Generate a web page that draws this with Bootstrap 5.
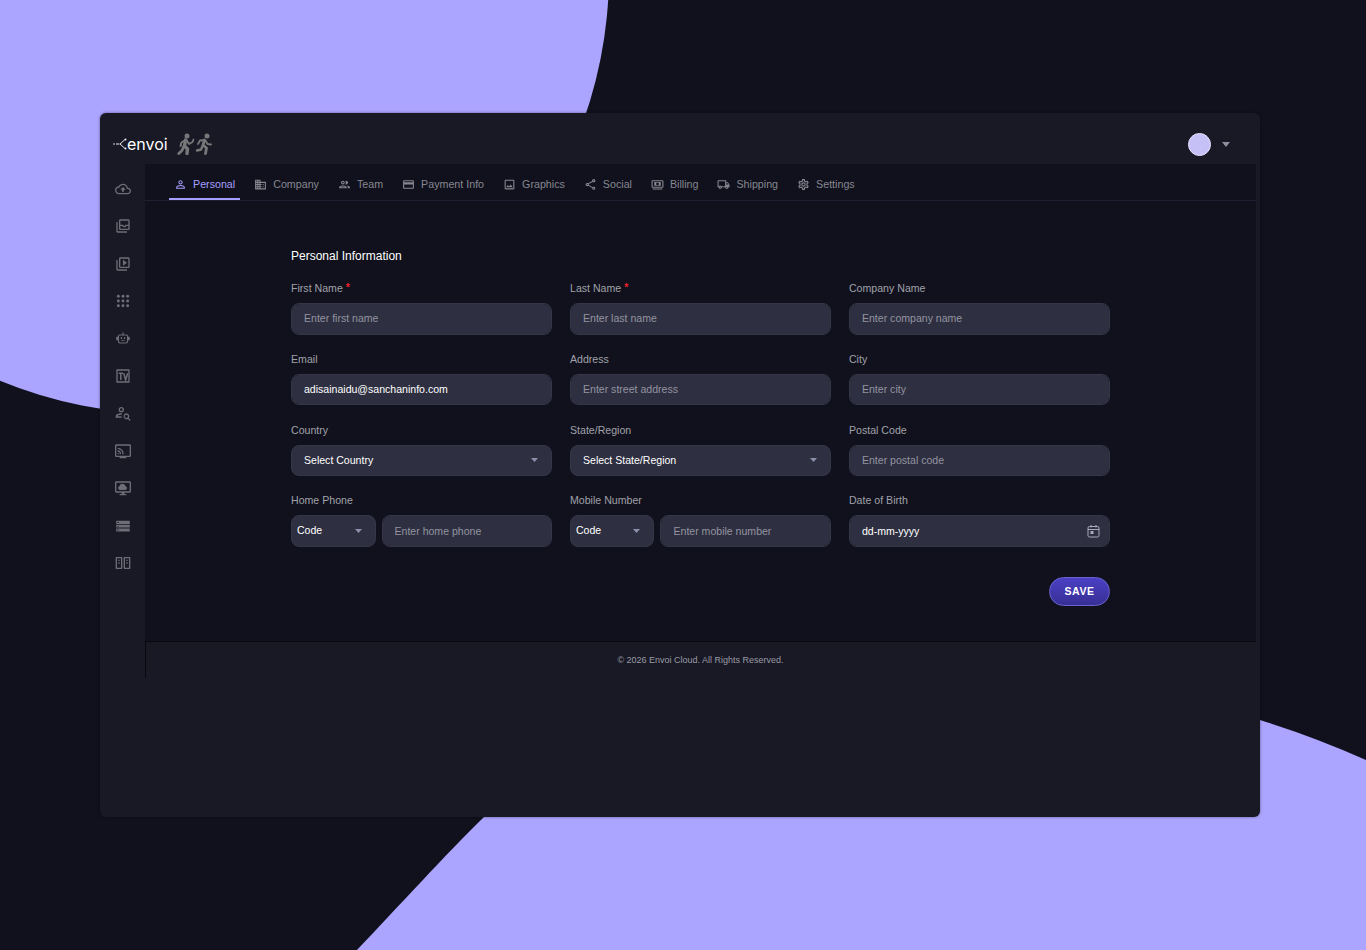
<!DOCTYPE html>
<html lang="en">
<head>
<meta charset="utf-8">
<title>Envoi - Personal</title>
<link href="https://cdn.jsdelivr.net/npm/bootstrap@5.3.0/dist/css/bootstrap.min.css" rel="stylesheet">
<style>
html,body{height:950px}
body{background:#10111c;font-family:"Liberation Sans",Arial,sans-serif;overflow:hidden;position:relative}
.bg-shapes{position:absolute;inset:0;width:1366px;height:950px}
.app-window{position:relative;margin:113px 0 0 100px;width:1160px;height:704px;background:#181925;border-radius:6px;box-shadow:0 0 3px rgba(0,0,0,.45);overflow:hidden}
.app-head{height:51px;padding:11px 30px 0 13px}
.brand-word{font-family:"Inter",sans-serif;font-size:16px;font-weight:400;color:#fff;line-height:1;margin:0 9px 0 0}
.avatar-dot{width:23px;height:23px;border-radius:50%;background:#c5c0f5;border:1px solid #e6e4ff}
.caret-sm{width:0;height:0;border:4px solid transparent;border-top:5px solid #8d8ea0;border-bottom:0}
.head-right{gap:11px}
.app-side{width:45px;height:514px;padding:17px 0 0 0;gap:21.4px}
.app-side svg{width:16px;height:16px;fill:#6c6d76;display:block}
.app-main{width:1111px}
.main-pane{height:477px;background:#10111c}
.tab-strip{height:37px;padding-left:24px;gap:9px;border-bottom:1px solid #1e1f30}
.tab-link{display:flex;align-items:center;gap:6px;height:36px;padding:5px 5px 0 5px;font-size:10.7px;color:#868791;text-decoration:none}
.tab-link svg{width:13px;height:13px;fill:currentColor;flex:none}
.tab-link.is-on{color:#a79fff;box-shadow:inset 0 -2px 0 #a79fff}
.form-wrap{width:819px;margin:48px auto 0}
.form-title{font-size:12px;font-weight:400;color:#fff;margin:0 0 17px;line-height:15px}
.form-row{--bs-gutter-x:18px;--bs-gutter-y:0;margin-bottom:17.3px}
.field-lab{display:block;font-size:10.6px;line-height:14px;color:#a0a1aa;margin-bottom:8px}
.field-lab b{color:#f0222c;font-weight:700;position:relative;top:-1.5px;font-size:10.6px;line-height:0}
.form-control.dark-in,.form-select.dark-in{height:31.5px;min-height:0;background-color:#2e2f40;border:1px solid #343546;border-radius:8px;font-size:10.55px;color:#fff;padding:0 12px;box-shadow:none}
.form-control.dark-in{padding-bottom:1px}
.form-control.dark-in::placeholder{color:#9394a0;opacity:1}
.form-select.dark-in{padding-top:1px;background-image:url("data:image/svg+xml,%3Csvg xmlns='http://www.w3.org/2000/svg' width='8' height='4'%3E%3Cpath d='M0 0h8L4 4z' fill='%238d8eaa'/%3E%3C/svg%3E");background-size:7px 4px;background-position:right 13px center}
.form-select.code-pick{width:84.5px;flex:none;padding-left:5px;padding-top:0}
.phone-pair{gap:6px}
.cal-ico{position:absolute;right:10px;top:9px;width:13px;height:14px;stroke:#a9aabb;fill:none}
.save-btn{width:61px;height:29px;padding:0;margin-top:30px;border-radius:15px;background:linear-gradient(180deg,#4b40c4,#372f95);border:1px solid #6a62cf;color:#fff;font-size:10.5px;font-weight:700;letter-spacing:.5px}
.foot-bar{height:37px;padding:2px 1px 0 0;border-top:1px solid #07070d;border-left:1px solid #07070d;font-size:9px;color:#9a9ba4}
</style>
</head>
<body>
<svg class="bg-shapes" viewBox="0 0 1366 950" aria-hidden="true">
  <circle cx="168" cy="-27" r="441" fill="#aca5ff"/>
  <path d="M357 950C400 905 445 855 484 817L700 660L1000 660L1260 720Q1315 737 1366 760V950Z" fill="#aca5ff"/>
</svg>

<div class="app-window">
  <header class="app-head d-flex align-items-center">
    <svg width="14" height="16" viewBox="0 0 14 16" fill="none" stroke="#e8e8ec"><circle cx="1" cy="8" r=".8" fill="#e8e8ec" stroke="none"/><path d="M3 8h3.500M7 8l5-4.500M7 8l5 4.500" stroke-width="1"/><circle cx="12.500" cy="3.500" r="1" fill="#e8e8ec" stroke="none"/><circle cx="12.500" cy="12.500" r="1" fill="#e8e8ec" stroke="none"/></svg>
    <span class="brand-word">envoi</span>
    <svg width="35" height="22" viewBox="0 0 35 22" fill="none" stroke="#77777a" stroke-linecap="round" stroke-linejoin="round">
      <circle cx="10" cy="3" r="2.500" fill="#77777a" stroke="none"/>
      <path d="M8.500 7L7.500 13L10.500 16L10 20.500" stroke-width="3.400"/><path d="M7 13L5 17.500L1.800 20.500" stroke-width="2.800"/><path d="M8.500 7L4.500 9.500L3.500 13" stroke-width="2"/><path d="M9.500 7L12 11L15.500 9L16.500 6.500" stroke-width="1.800"/>
      <circle cx="30" cy="3" r="2.500" fill="#77777a" stroke="none"/>
      <path d="M27.500 7L26 12L29.500 15L28.500 20.500" stroke-width="2.800"/><path d="M26 12L24 16.500L20 17.500" stroke-width="2.400"/><path d="M27.500 7L23 7.500L21 11" stroke-width="1.800"/><path d="M28.500 7.500L30.500 11L34 11.500" stroke-width="1.800"/>
    </svg>
    <div class="ms-auto d-flex align-items-center head-right">
      <span class="avatar-dot"></span><span class="caret-sm"></span>
    </div>
  </header>

  <div class="d-flex">
    <nav class="app-side d-flex flex-column align-items-center">
      <svg viewBox="0 0 24 24"><path d="M19.350 10.040C18.670 6.590 15.640 4 12 4 9.110 4 6.600 5.640 5.350 8.040 2.340 8.360 0 10.910 0 14c0 3.310 2.690 6 6 6h13c2.760 0 5-2.240 5-5 0-2.640-2.050-4.780-4.650-4.960zM19 18H6c-2.210 0-4-1.790-4-4 0-2.050 1.530-3.760 3.560-3.970l1.070-.11.5-.95C8.080 7.140 9.940 6 12 6c2.620 0 4.880 1.860 5.390 4.430l.3 1.500 1.530.11c1.560.1 2.780 1.410 2.780 2.960 0 1.650-1.350 3-3 3zM8 13h2.550v3h2.900v-3H16l-4-4z"/></svg>
      <svg viewBox="0 0 24 24"><path d="M4 6H2v14c0 1.100.9 2 2 2h14v-2H4V6zm16-4H8c-1.100 0-2 .9-2 2v12c0 1.100.9 2 2 2h12c1.100 0 2-.9 2-2V4c0-1.100-.9-2-2-2zm0 14H8v-4h3c.4 1.200 1.600 2 3 2s2.600-.8 3-2h3v4zm0-6h-4.500c0 .9-.7 2-1.500 2s-1.500-1.100-1.500-2H8V4h12v6z"/></svg>
      <svg viewBox="0 0 24 24"><path d="M4 6H2v14c0 1.100.9 2 2 2h14v-2H4V6zm16-4H8c-1.100 0-2 .9-2 2v12c0 1.100.9 2 2 2h12c1.100 0 2-.9 2-2V4c0-1.100-.9-2-2-2zm0 14H8V4h12v12zM12 5.500v9l6-4.500z"/></svg>
      <svg viewBox="0 0 24 24"><circle cx="5" cy="5" r="2.200"/><circle cx="12" cy="5" r="2.200"/><circle cx="19" cy="5" r="2.200"/><circle cx="5" cy="12" r="2.200"/><circle cx="12" cy="12" r="2.200"/><circle cx="19" cy="12" r="2.200"/><circle cx="5" cy="19" r="2.200"/><circle cx="12" cy="19" r="2.200"/><circle cx="19" cy="19" r="2.200"/></svg>
      <svg viewBox="-2 -1 28 28"><path d="M11 1.500h2V5h-2zM6 5h12a3 3 0 0 1 3 3v1h1.500a1.500 1.500 0 0 1 1.500 1.500v3a1.500 1.500 0 0 1-1.500 1.500H21v2a4 4 0 0 1-4 4H7a4 4 0 0 1-4-4v-2H1.500A1.500 1.500 0 0 1 0 13.500v-3A1.500 1.500 0 0 1 1.500 9H3V8a3 3 0 0 1 3-3zm0 2a1 1 0 0 0-1 1v9a2 2 0 0 0 2 2h10a2 2 0 0 0 2-2V8a1 1 0 0 0-1-1zm2 3h2.500v3H8zm5.500 0H16v3h-2.500zM9 15h6v1.500H9z"/></svg>
      <svg viewBox="0 0 24 24"><path d="M3 2h18a1 1 0 0 1 1 1v18a1 1 0 0 1-1 1H3a1 1 0 0 1-1-1V3a1 1 0 0 1 1-1zm1 2v16h16V4z"/><path d="M5.500 8h6.500M8.700 8v10M13 8l3 10 3-10" fill="none" stroke="#6c6d76" stroke-width="2.300"/></svg>
      <svg viewBox="0 0 24 24"><path d="M9.500 3a4 4 0 1 1 0 8 4 4 0 0 1 0-8zm0 2a2 2 0 1 0 0 4 2 2 0 0 0 0-4zM1 19v-2c0-2.500 4-4.500 8.500-4.500.5 0 .9 0 1.300.1-.4.600-.7 1.200-.8 1.900h-.5c-3.500 0-6.500 1.500-6.500 2.500h6.600c.2.700.5 1.400.9 2zm16-6.500a4.500 4.500 0 0 1 3.600 7.200l2.900 2.900-1.400 1.400-2.900-2.900A4.500 4.500 0 1 1 17 12.500zm0 2a2.500 2.500 0 1 0 0 5 2.500 2.500 0 0 0 0-5z"/></svg>
      <svg viewBox="0 0 24 24"><path d="M2 2h20a2 2 0 0 1 2 2v15a2 2 0 0 1-2 2h-5v2H7v-2H2a2 2 0 0 1-2-2V4a2 2 0 0 1 2-2zm0 2v15h20V4zM4 7a9 9 0 0 1 9 10h-2A7 7 0 0 0 4 9zm0 4a5 5 0 0 1 5 6H7a3 3 0 0 0-3-4zm0 4a2 2 0 0 1 2 2H4z"/></svg>
      <svg viewBox="0 0 24 24"><path d="M2 2h20a2 2 0 0 1 2 2v13a2 2 0 0 1-2 2h-8v2h3v2H7v-2h3v-2H2a2 2 0 0 1-2-2V4a2 2 0 0 1 2-2zm0 2v13h20V4zm10 2a4 4 0 0 1 3.900 3.200A3 3 0 0 1 15.500 15h-8a3 3 0 0 1-.6-5.900A4 4 0 0 1 12 6z"/></svg>
      <svg viewBox="-1 -1 26 26"><path d="M1 3.500h22V9H1zm0 7h22v4H1zm0 5.500h22v5H1z"/><path fill="#181925" d="M3 5.700h2v1.500H3zM3 11.800h2v1.500H3zM3 17.800h2v1.500H3z"/></svg>
      <svg viewBox="0 0 24 24"><path d="M2 3h8a1 1 0 0 1 1 1v16a1 1 0 0 1-1 1H2a1 1 0 0 1-1-1V4a1 1 0 0 1 1-1zm1 2v14h6V5zm2 2h2v2H5zm0 4h2v2H5zM14 3h8a1 1 0 0 1 1 1v16a1 1 0 0 1-1 1h-8a1 1 0 0 1-1-1V4a1 1 0 0 1 1-1zm1 2v14h6V5zm2 2h2v2h-2zm0 4h2v2h-2z"/></svg>
    </nav>

    <div class="app-main">
      <div class="main-pane">
        <nav class="tab-strip d-flex">
          <a class="tab-link is-on" href="#"><svg viewBox="0 0 24 24"><path d="M12 5.900c1.160 0 2.100.94 2.100 2.100s-.94 2.100-2.100 2.100S9.900 9.160 9.900 8s.94-2.100 2.100-2.100m0 9c2.970 0 6.100 1.460 6.100 2.100v1.100H5.900V17c0-.64 3.130-2.100 6.100-2.100M12 4C9.790 4 8 5.790 8 8s1.790 4 4 4 4-1.790 4-4-1.790-4-4-4zm0 9c-2.670 0-8 1.340-8 4v3h16v-3c0-2.660-5.330-4-8-4z"/></svg>Personal</a>
          <a class="tab-link" href="#"><svg viewBox="0 0 24 24"><path d="M12 7V3H2v18h20V7H12zM6 19H4v-2h2v2zm0-4H4v-2h2v2zm0-4H4V9h2v2zm0-4H4V5h2v2zm4 12H8v-2h2v2zm0-4H8v-2h2v2zm0-4H8V9h2v2zm0-4H8V5h2v2zm10 12h-8v-2h2v-2h-2v-2h2v-2h-2V9h8v10zm-2-8h-2v2h2v-2zm0 4h-2v2h2v-2z"/></svg>Company</a>
          <a class="tab-link" href="#"><svg viewBox="0 0 24 24"><path d="M9 13.750c-2.340 0-7 1.170-7 3.500V19h14v-1.750c0-2.330-4.660-3.500-7-3.500zM4.340 17c.84-.58 2.870-1.250 4.660-1.250s3.820.67 4.660 1.250H4.340zM9 12c1.930 0 3.500-1.570 3.500-3.500S10.930 5 9 5 5.500 6.570 5.500 8.500 7.070 12 9 12zm0-5c.83 0 1.500.67 1.500 1.500S9.830 10 9 10s-1.500-.67-1.500-1.500S8.170 7 9 7zm7.040 6.810c1.160.84 1.960 1.960 1.960 3.440V19h4v-1.750c0-2.020-3.500-3.170-5.960-3.440zM15 12c1.930 0 3.500-1.570 3.500-3.500S16.930 5 15 5c-.54 0-1.040.13-1.500.35.630.89 1 1.980 1 3.150s-.37 2.260-1 3.150c.46.22.96.35 1.500.35z"/></svg>Team</a>
          <a class="tab-link" href="#"><svg viewBox="0 0 24 24"><path d="M20 4H4c-1.110 0-1.990.89-1.990 2L2 18c0 1.110.89 2 2 2h16c1.110 0 2-.89 2-2V6c0-1.110-.89-2-2-2zm0 14H4v-6h16v6zm0-10H4V6h16v2z"/></svg>Payment Info</a>
          <a class="tab-link" href="#"><svg viewBox="0 0 24 24"><path d="M19 5v14H5V5h14m0-2H5c-1.100 0-2 .9-2 2v14c0 1.100.9 2 2 2h14c1.100 0 2-.9 2-2V5c0-1.100-.9-2-2-2zm-4.860 8.860l-3 3.870L9 13.140 6 17h12l-3.860-5.140z"/></svg>Graphics</a>
          <a class="tab-link" href="#"><svg viewBox="0 0 24 24"><path d="M18 16.080c-.76 0-1.440.3-1.960.77L8.910 12.700c.05-.23.09-.46.09-.7s-.04-.47-.09-.7l7.050-4.110c.54.5 1.250.81 2.040.81 1.660 0 3-1.340 3-3s-1.340-3-3-3-3 1.340-3 3c0 .24.04.47.09.7L8.040 9.810C7.500 9.310 6.790 9 6 9c-1.660 0-3 1.340-3 3s1.340 3 3 3c.79 0 1.500-.31 2.040-.81l7.120 4.160c-.05.21-.08.43-.08.65 0 1.610 1.310 2.920 2.920 2.920 1.610 0 2.920-1.310 2.920-2.920s-1.310-2.920-2.920-2.920zM18 4c.55 0 1 .45 1 1s-.45 1-1 1-1-.45-1-1 .45-1 1-1zM6 13c-.55 0-1-.45-1-1s.45-1 1-1 1 .45 1 1-.45 1-1 1zm12 7.020c-.55 0-1-.45-1-1s.45-1 1-1 1 .45 1 1-.45 1-1 1z"/></svg>Social</a>
          <a class="tab-link" href="#"><svg viewBox="0 0 24 24"><path d="M3 4h18a2 2 0 0 1 2 2v10a2 2 0 0 1-2 2H3a2 2 0 0 1-2-2V6a2 2 0 0 1 2-2zm0 2v10h18V6zm3 1.500h12v7H6zm6 1a2.500 2.500 0 1 0 0 5 2.500 2.500 0 0 0 0-5zM3 19.500h18V21H3z"/></svg>Billing</a>
          <a class="tab-link" href="#"><svg viewBox="0 0 24 24"><path d="M20 8h-3V4H3c-1.100 0-2 .9-2 2v11h2c0 1.660 1.340 3 3 3s3-1.340 3-3h6c0 1.660 1.340 3 3 3s3-1.340 3-3h2v-5l-3-4zm-.5 1.500l1.960 2.500H17V9.500h2.500zM6 18c-.55 0-1-.45-1-1s.45-1 1-1 1 .45 1 1-.45 1-1 1zm2.220-3c-.55-.61-1.330-1-2.220-1s-1.670.39-2.220 1H3V6h12v9H8.220zM18 18c-.55 0-1-.45-1-1s.45-1 1-1 1 .45 1 1-.45 1-1 1z"/></svg>Shipping</a>
          <a class="tab-link" href="#"><svg viewBox="0 0 24 24"><path d="M19.430 12.980c.04-.32.07-.64.07-.98s-.03-.66-.07-.98l2.110-1.650c.19-.15.24-.42.12-.64l-2-3.460c-.12-.22-.39-.3-.61-.22l-2.490 1c-.52-.4-1.080-.73-1.690-.98l-.38-2.650C14.460 2.180 14.250 2 14 2h-4c-.25 0-.46.18-.49.42l-.38 2.650c-.61.25-1.170.59-1.690.98l-2.490-1c-.23-.09-.49 0-.61.22l-2 3.460c-.13.22-.07.49.12.64l2.110 1.650c-.04.32-.07.65-.07.98s.03.66.07.98l-2.110 1.650c-.19.15-.24.42-.12.64l2 3.460c.12.22.39.3.61.22l2.490-1c.52.4 1.080.73 1.690.98l.38 2.650c.03.24.24.42.49.42h4c.25 0 .46-.18.49-.42l.38-2.650c.61-.25 1.170-.59 1.690-.98l2.490 1c.23.09.49 0 .61-.22l2-3.460c.12-.22.07-.49-.12-.64l-2.110-1.650zm-1.980-1.710c.04.31.05.52.05.73 0 .21-.02.43-.05.73l-.14 1.130.89.7 1.080.84-.7 1.210-1.270-.51-1.040-.42-.9.68c-.43.32-.84.56-1.250.73l-1.060.43-.16 1.130-.2 1.350h-1.400l-.19-1.350-.16-1.130-1.060-.43c-.43-.18-.83-.41-1.230-.71l-.91-.7-1.060.43-1.270.51-.7-1.210 1.080-.84.89-.7-.14-1.130c-.03-.31-.05-.54-.05-.74s.02-.43.05-.73l.14-1.130-.89-.7-1.080-.84.7-1.210 1.270.51 1.040.42.9-.68c.43-.32.84-.56 1.250-.73l1.060-.43.16-1.130.2-1.350h1.390l.19 1.350.16 1.130 1.060.43c.43.18.83.41 1.230.71l.91.7 1.060-.43 1.270-.51.7 1.210-1.070.85-.89.7.14 1.130zM12 8c-2.210 0-4 1.790-4 4s1.790 4 4 4 4-1.790 4-4-1.790-4-4-4zm0 6c-1.100 0-2-.9-2-2s.9-2 2-2 2 .9 2 2-.9 2-2 2z"/></svg>Settings</a>
        </nav>

        <form class="form-wrap">
          <h2 class="form-title">Personal Information</h2>
          <div class="row form-row">
            <div class="col-4"><label class="field-lab">First Name <b>*</b></label><input class="form-control dark-in" placeholder="Enter first name"></div>
            <div class="col-4"><label class="field-lab">Last Name <b>*</b></label><input class="form-control dark-in" placeholder="Enter last name"></div>
            <div class="col-4"><label class="field-lab">Company Name</label><input class="form-control dark-in" placeholder="Enter company name"></div>
          </div>
          <div class="row form-row">
            <div class="col-4"><label class="field-lab">Email</label><input class="form-control dark-in" value="adisainaidu@sanchaninfo.com"></div>
            <div class="col-4"><label class="field-lab">Address</label><input class="form-control dark-in" placeholder="Enter street address"></div>
            <div class="col-4"><label class="field-lab">City</label><input class="form-control dark-in" placeholder="Enter city"></div>
          </div>
          <div class="row form-row">
            <div class="col-4"><label class="field-lab">Country</label><select class="form-select dark-in"><option>Select Country</option></select></div>
            <div class="col-4"><label class="field-lab">State/Region</label><select class="form-select dark-in"><option>Select State/Region</option></select></div>
            <div class="col-4"><label class="field-lab">Postal Code</label><input class="form-control dark-in" placeholder="Enter postal code"></div>
          </div>
          <div class="row form-row mb-0">
            <div class="col-4"><label class="field-lab">Home Phone</label><div class="d-flex phone-pair"><select class="form-select dark-in code-pick"><option>Code</option></select><input class="form-control dark-in" placeholder="Enter home phone"></div></div>
            <div class="col-4"><label class="field-lab">Mobile Number</label><div class="d-flex phone-pair"><select class="form-select dark-in code-pick"><option>Code</option></select><input class="form-control dark-in" placeholder="Enter mobile number"></div></div>
            <div class="col-4"><label class="field-lab">Date of Birth</label><div class="position-relative"><input class="form-control dark-in" value="dd-mm-yyyy"><svg class="cal-ico" viewBox="0 0 13 14"><rect x="1" y="2.500" width="11" height="10.500" rx="1.500"/><path d="M1 5.500h11M4 1v2.500M9 1v2.500"/><rect x="3.500" y="7" width="3" height="3" fill="#a9aabb" stroke="none"/></svg></div></div>
          </div>
          <div class="d-flex justify-content-end"><button type="button" class="btn save-btn">SAVE</button></div>
        </form>
      </div>
      <footer class="foot-bar d-flex align-items-center justify-content-center">© 2026 Envoi Cloud. All Rights Reserved.</footer>
    </div>
  </div>
</div>
</body>
</html>
